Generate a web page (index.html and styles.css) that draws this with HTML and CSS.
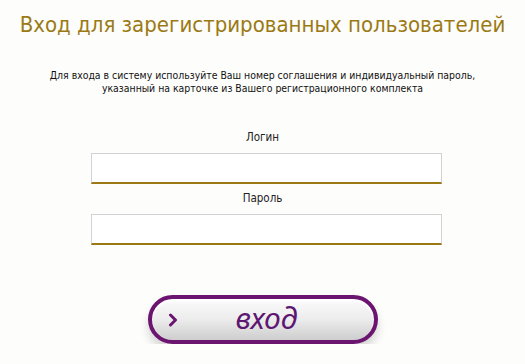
FILE: index.html
```html
<!DOCTYPE html>
<html lang="ru">
<head>
    <meta charset="UTF-8">
    <title>Вход для зарегистрированных пользователей</title>
    <link rel="stylesheet" href="styles.css">
</head>
<body>
    <div class="login-page">
        <h1 class="login-title">Вход для зарегистрированных пользователей</h1>
        <p class="login-note">
            Для входа в систему используйте Ваш номер соглашения и индивидуальный пароль,<br>
            указанный на карточке из Вашего регистрационного комплекта
        </p>

        <form class="login-form" onsubmit="return false;">
            <label class="field-label" for="login">Логин</label>
            <input class="field-input" type="text" id="login">
            <label class="field-label" for="password">Пароль</label>
            <input class="field-input" type="password" id="password">

            <button class="login-button" type="submit">
                <svg class="login-arrow" width="10" height="14" viewBox="0 0 10 14">
                    <polyline points="2.5,2 7.5,7 2.5,12" fill="none" stroke="#6c1570" stroke-width="3" stroke-linecap="round" stroke-linejoin="round"/>
                </svg>
                <span class="login-text">вход</span>
            </button>
        </form>
    </div>
</body>
</html>
```

FILE: styles.css
```css
html, body {
    margin: 0;
    padding: 0;
    background: #fdfdfb;
}
.login-page {
    width: 525px;
    font-family: "DejaVu Sans Condensed", "DejaVu Sans", sans-serif;
    text-align: center;
}
.login-title {
    margin: 0;
    padding-top: 10px;
    font-size: 22px;
    font-weight: normal;
    line-height: 30px;
    color: #9b7a15;
}
.login-note {
    margin: 29px 0 0;
    font-size: 10.4px;
    line-height: 13px;
    color: #111;
}
.login-form {
    display: flex;
    flex-direction: column;
    align-items: center;
    margin-top: 35px;
}
.field-label {
    font-size: 11.5px;
    line-height: 14px;
    color: #222;
}
.field-input {
    box-sizing: border-box;
    width: 351px;
    height: 31px;
    margin: 9px 0 7px 7px;
    border: 1px solid #d2d2d2;
    border-bottom: 2px solid #9b7a15;
    background: #fff;
    outline: none;
}
.login-button {
    box-sizing: border-box;
    position: relative;
    width: 230px;
    height: 49px;
    margin-top: 43px;
    margin-left: 1px;
    border: 4px solid #6c1570;
    border-radius: 25px;
    background: linear-gradient(#fbfbfb, #ececec 50%, #cdcdcd);
    box-shadow: 0 7px 10px rgba(0,0,0,0.16), inset 0 2px 3px #fff;
    cursor: pointer;
    padding: 0;
}
.login-arrow {
    position: absolute;
    left: 16px;
    top: 14px;
}
.login-text {
    display: block;
    padding-left: 7px;
    font-family: "Noto Sans", sans-serif;
    font-size: 30px;
    font-style: italic;
    color: #5d1671;
    line-height: 36px;
    margin-top: -3px;
}
```
